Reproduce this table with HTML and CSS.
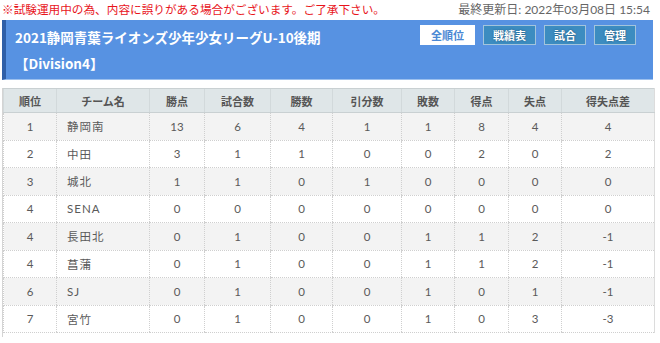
FILE: index.html
```html
<!DOCTYPE html>
<html lang="ja">
<head>
<meta charset="utf-8">
<title>順位表</title>
<link rel="stylesheet" href="styles.css">
</head>
<body>
<div class="page">
  <div class="topbar">
    <span class="notice">※試験運用中の為、内容に誤りがある場合がございます。ご了承下さい。</span>
    <span class="updated">最終更新日: 2022年03月08日 15:54</span>
  </div>
  <div class="league">
    <div class="league-text">
      <div class="league-title">2021静岡青葉ライオンズ少年少女リーグU-10後期</div>
      <div class="league-div">【Division4】</div>
    </div>
    <div class="league-btns">
      <span class="btn btn-active">全順位</span>
      <span class="btn">戦績表</span>
      <span class="btn">試合</span>
      <span class="btn">管理</span>
    </div>
  </div>
  <div class="table-wrap">
    <table class="standings">
      <colgroup>
        <col class="c-rank"><col class="c-team"><col class="c-pt"><col class="c-gp"><col class="c-w"><col class="c-d"><col class="c-l"><col class="c-gf"><col class="c-ga"><col class="c-gd">
      </colgroup>
      <thead>
        <tr><th>順位</th><th>チーム名</th><th>勝点</th><th>試合数</th><th>勝数</th><th>引分数</th><th>敗数</th><th>得点</th><th>失点</th><th>得失点差</th></tr>
      </thead>
      <tbody>
        <tr><td>1</td><td class="team">静岡南</td><td>13</td><td>6</td><td>4</td><td>1</td><td>1</td><td>8</td><td>4</td><td>4</td></tr>
        <tr><td>2</td><td class="team">中田</td><td>3</td><td>1</td><td>1</td><td>0</td><td>0</td><td>2</td><td>0</td><td>2</td></tr>
        <tr><td>3</td><td class="team">城北</td><td>1</td><td>1</td><td>0</td><td>1</td><td>0</td><td>0</td><td>0</td><td>0</td></tr>
        <tr><td>4</td><td class="team">SENA</td><td>0</td><td>0</td><td>0</td><td>0</td><td>0</td><td>0</td><td>0</td><td>0</td></tr>
        <tr><td>4</td><td class="team">長田北</td><td>0</td><td>1</td><td>0</td><td>0</td><td>1</td><td>1</td><td>2</td><td>-1</td></tr>
        <tr><td>4</td><td class="team">菖蒲</td><td>0</td><td>1</td><td>0</td><td>0</td><td>1</td><td>1</td><td>2</td><td>-1</td></tr>
        <tr><td>6</td><td class="team">SJ</td><td>0</td><td>1</td><td>0</td><td>0</td><td>1</td><td>0</td><td>1</td><td>-1</td></tr>
        <tr><td>7</td><td class="team">宮竹</td><td>0</td><td>1</td><td>0</td><td>0</td><td>1</td><td>0</td><td>3</td><td>-3</td></tr>
      </tbody>
    </table>
  </div>
</div>
</body>
</html>
```
FILE: styles.css
```css
html, body {
  margin: 0;
  padding: 0;
  background: #ffffff;
}
body {
  font-family: Lato, "Noto Sans CJK JP", sans-serif;
  color: #555;
}
.page {
  padding: 0 7px 0 2px;
}
.topbar {
  display: flex;
  justify-content: space-between;
  align-items: center;
  height: 18px;
  margin-top: -1px;
  padding-right: 3px;
}
.notice {
  color: #e8141b;
  font-family: "Noto Sans CJK JP", sans-serif;
  font-size: 11.65px;
  white-space: nowrap;
}
.updated {
  color: #666;
  font-size: 12px;
  font-family: Lato, "Noto Sans CJK JP", sans-serif;
  white-space: nowrap;
}
.league {
  margin-top: 3px;
  height: 59px;
  background: #5792e2;
  border-left: 4px solid #2e5fa8;
  border-bottom: 1px solid #9cc0ee;
  display: flex;
  justify-content: space-between;
  align-items: flex-start;
  color: #fff;
}
.league-text {
  padding: 8px 0 0 9px;
}
.league-title {
  font-family: "Noto Sans CJK JP", sans-serif;
  font-weight: 700;
  font-size: 13.5px;
  line-height: 18px;
}
.league-div {
  font-family: "Noto Sans CJK JP", sans-serif;
  font-weight: 700;
  font-size: 13.5px;
  line-height: 18px;
  margin-top: 8px;
}
.league-btns {
  display: flex;
  gap: 8px;
  padding: 5px 17px 0 0;
}
.btn {
  display: inline-flex;
  align-items: center;
  justify-content: center;
  height: 18px;
  padding: 0 9px;
  background: #3c8cc0;
  border: 1px solid #a3c4dc;
  color: #fff;
  font-family: "Noto Sans CJK JP", sans-serif;
  font-weight: 700;
  font-size: 11px;
  text-shadow: 0 0 2px #1d4f70;
}
.btn-active {
  background: #fff;
  border-color: #fff;
  color: #4a88d4;
  text-shadow: none;
  padding: 0 10px;
}
.table-wrap {
  margin-top: 8px;
  border-left: 1px solid #d4d4d4;
  padding-bottom: 4px;
}
.standings {
  width: 651px;
  border-collapse: collapse;
  table-layout: fixed;
  font-size: 11.5px;
}
.c-rank { width: 53px; }
.c-team { width: 93px; }
.c-pt { width: 55px; }
.c-gp { width: 66px; }
.c-w { width: 62px; }
.c-d { width: 69px; }
.c-l { width: 53px; }
.c-gf { width: 54px; }
.c-ga { width: 53px; }
.c-gd { width: 93px; }
.standings th {
  background: #dfe6e8;
  color: #555;
  font-family: "Noto Sans CJK JP", sans-serif;
  font-weight: 700;
  font-size: 11px;
  height: 23px;
  padding: 0;
  border-top: 1px solid #c9d0d2;
  border-left: 1px solid #d2d9db;
  border-bottom: 1px solid #c9d0d2;
}
.standings td {
  height: 26.5px;
  padding: 0;
  text-align: center;
  color: #5a5a5a;
  border-left: 1px dotted #cfcfcf;
  border-bottom: 1px dotted #cfcfcf;
}
.standings td.team {
  text-align: left;
  padding-left: 10px;
  font-family: Lato, "Noto Sans CJK JP", sans-serif;
  letter-spacing: 1px;
}
.standings tbody tr:nth-child(odd) td {
  background: #f3f3f3;
}
.standings th:last-child,
.standings td:last-child {
  border-right: 1px solid #dcdcdc;
}
```
